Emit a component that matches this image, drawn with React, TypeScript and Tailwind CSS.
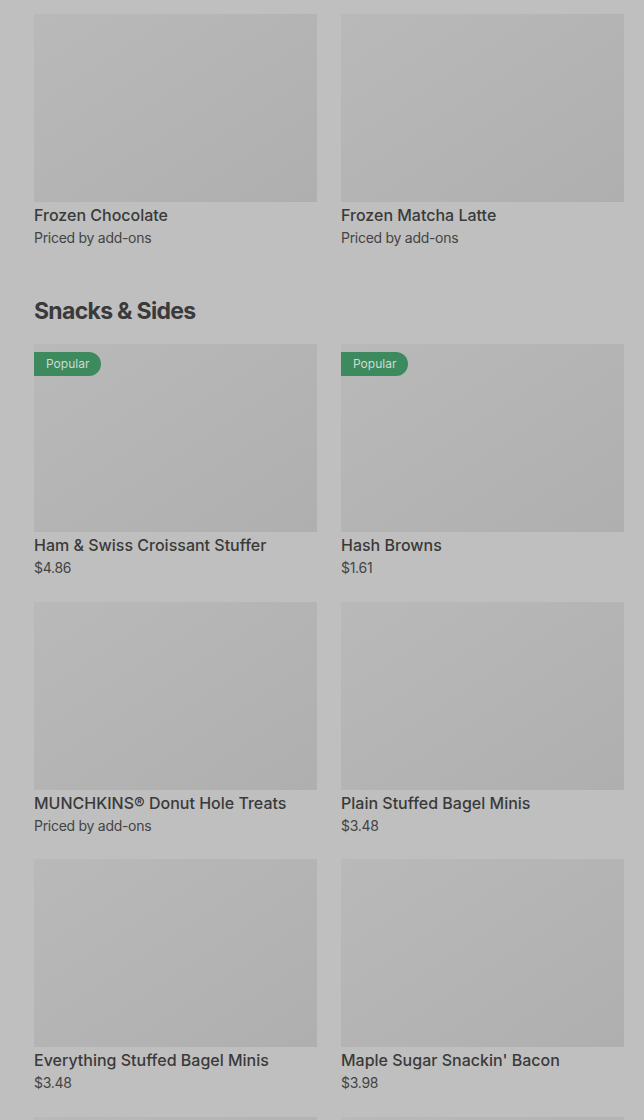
type Item = { name: string; price: string; popular?: boolean };

const FROZEN: Item[] = [
  { name: "Frozen Chocolate", price: "Priced by add-ons" },
  { name: "Frozen Matcha Latte", price: "Priced by add-ons" },
];

const SNACKS: Item[] = [
  { name: "Ham & Swiss Croissant Stuffer", price: "$4.86", popular: true },
  { name: "Hash Browns", price: "$1.61", popular: true },
  { name: "MUNCHKINS® Donut Hole Treats", price: "Priced by add-ons" },
  { name: "Plain Stuffed Bagel Minis", price: "$3.48" },
  { name: "Everything Stuffed Bagel Minis", price: "$3.48" },
  { name: "Maple Sugar Snackin' Bacon", price: "$3.98" },
];

function Thumb({ popular }: { popular?: boolean }) {
  return (
    <div className="relative h-[188px] bg-linear-to-br from-[#b9b9b9] to-[#afafaf]">
      {popular && (
        <span className="absolute left-0 top-2 flex h-6 items-center rounded-r-full bg-[#3c8a5e] pl-3 pr-3 text-[12px] text-[#cfdcd3]">
          Popular
        </span>
      )}
    </div>
  );
}

function ItemCard({ item }: { item: Item }) {
  return (
    <div className="flex flex-col">
      <Thumb popular={item.popular} />
      <div className="mt-px text-[16px] leading-6 font-medium text-[#3a3a3a]">{item.name}</div>
      <div className="mt-px text-[14px] leading-5 tracking-[-0.02em] text-[#444444]">{item.price}</div>
    </div>
  );
}

export default function App() {
  return (
    <div
      className="h-[1120px] overflow-hidden bg-[#bfbfbf] pl-[34px] pr-[20px] pt-[14px]"
      style={{ fontFamily: "Inter, 'Noto Sans', sans-serif" }}
    >
      <div className="grid grid-cols-2 gap-x-6">
        {FROZEN.map((it) => (
          <ItemCard key={it.name} item={it} />
        ))}
      </div>

      <h2 className="mt-[47px] text-[23px] leading-8 font-bold tracking-[-0.03em] text-[#3a3a3a]">
        Snacks &amp; Sides
      </h2>

      <div className="mt-[17px] grid grid-cols-2 gap-x-6 gap-y-[23.5px]">
        {SNACKS.map((it) => (
          <ItemCard key={it.name} item={it} />
        ))}
        {/* next row, only its pictures reach into the view */}
        <Thumb />
        <Thumb />
      </div>
    </div>
  );
}
